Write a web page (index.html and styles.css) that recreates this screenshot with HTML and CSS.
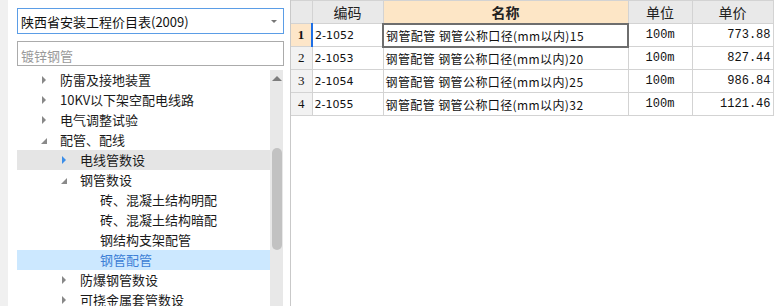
FILE: index.html
```html
<!DOCTYPE html>
<html lang="zh-CN">
<head>
    <meta charset="UTF-8">
    <title>价目表</title>
    <link rel="stylesheet" href="styles.css">
</head>
<body>
    <div class="sidebar">
        <div class="combo">
            <span>陕西省安装工程价目表(2009)</span>
            <span class="combo-arrow"></span>
        </div>
        <div class="search">
            <input type="text" placeholder="镀锌钢管">
        </div>
        <div class="tree-wrap">
            <ul class="tree">
                <li class="node lv1"><span class="tw closed"></span>防雷及接地装置</li>
                <li class="node lv1"><span class="tw closed"></span>10KV以下架空配电线路</li>
                <li class="node lv1"><span class="tw closed"></span>电气调整试验</li>
                <li class="node lv1"><span class="tw open"></span>配管、配线</li>
                <li class="node lv2 hover"><span class="tw closed"></span>电线管数设</li>
                <li class="node lv2"><span class="tw open"></span>钢管数设</li>
                <li class="node lv3"><span class="tw"></span>砖、混凝土结构明配</li>
                <li class="node lv3"><span class="tw"></span>砖、混凝土结构暗配</li>
                <li class="node lv3"><span class="tw"></span>钢结构支架配管</li>
                <li class="node lv3 selected"><span class="tw"></span>钢管配管</li>
                <li class="node lv2"><span class="tw closed"></span>防爆钢管数设</li>
                <li class="node lv2"><span class="tw closed"></span>可挠金属套管数设</li>
            </ul>
            <div class="scrollbar">
                <div class="sb-up"></div>
                <div class="sb-thumb"></div>
            </div>
        </div>
    </div>
    <div class="main">
        <table class="grid">
            <colgroup>
                <col style="width:21px">
                <col style="width:71px">
                <col style="width:245px">
                <col style="width:64px">
                <col style="width:81px">
            </colgroup>
            <thead>
                <tr>
                    <th></th>
                    <th>编码</th>
                    <th class="sorted">名称</th>
                    <th>单位</th>
                    <th>单价</th>
                </tr>
            </thead>
            <tbody>
                <tr class="current">
                    <td class="num">1</td>
                    <td class="code">2-1052</td>
                    <td class="name active">钢管配管 钢管公称口径(mm以内)15</td>
                    <td class="unit">100m</td>
                    <td class="price">773.88</td>
                </tr>
                <tr>
                    <td class="num">2</td>
                    <td class="code">2-1053</td>
                    <td class="name">钢管配管 钢管公称口径(mm以内)20</td>
                    <td class="unit">100m</td>
                    <td class="price">827.44</td>
                </tr>
                <tr>
                    <td class="num">3</td>
                    <td class="code">2-1054</td>
                    <td class="name">钢管配管 钢管公称口径(mm以内)25</td>
                    <td class="unit">100m</td>
                    <td class="price">986.84</td>
                </tr>
                <tr>
                    <td class="num">4</td>
                    <td class="code">2-1055</td>
                    <td class="name">钢管配管 钢管公称口径(mm以内)32</td>
                    <td class="unit">100m</td>
                    <td class="price">1121.46</td>
                </tr>
            </tbody>
        </table>
    </div>
</body>
</html>
```

FILE: styles.css
```css
* {
    box-sizing: border-box;
}
body {
    margin: 0;
    width: 781px;
    height: 306px;
    overflow: hidden;
    display: flex;
    background: #fff;
    font-family: "Noto Sans CJK SC", "Noto Sans", sans-serif;
    color: #1a1a1a;
}
.sidebar {
    width: 291px;
    height: 306px;
    flex-shrink: 0;
    border-left: 8px solid #f0f0f0;
    border-right: 1px solid #c9c9c9;
    padding: 8px 0 0 9px;
    display: flex;
    flex-direction: column;
}
.combo {
    width: 267px;
    height: 26px;
    border: 1px solid #5b9de6;
    display: flex;
    align-items: center;
    justify-content: space-between;
    padding: 0 6px 0 3px;
    font-size: 13px;
    color: #111;
}
.combo-arrow {
    width: 0;
    height: 0;
    border-left: 3px solid transparent;
    border-right: 3px solid transparent;
    border-top: 3px solid #777;
    margin-top: 1px;
}
.search {
    margin-top: 7px;
    width: 267px;
    height: 25px;
    border: 1px solid #ababab;
}
.search input {
    width: 100%;
    height: 100%;
    border: none;
    outline: none;
    padding: 0 3px;
    font-family: inherit;
    font-size: 13px;
    background: transparent;
}
.search input::placeholder {
    color: #9a9a9a;
}
.tree-wrap {
    margin-top: 4px;
    width: 266px;
    flex: 1;
    display: flex;
    overflow: hidden;
}
.tree {
    list-style: none;
    margin: 0;
    padding: 0;
    width: 253px;
}
.node {
    height: 20px;
    display: flex;
    align-items: center;
    font-size: 13px;
    line-height: 16px;
    white-space: nowrap;
}
.node.lv1 { padding-left: 25px; }
.node.lv2 { padding-left: 45px; }
.node.lv3 { padding-left: 65px; }
.node.hover {
    background: #e5e5e5;
}
.node.selected {
    background: #cce8ff;
    color: #3d7fd6;
}
.tw {
    width: 18px;
    height: 20px;
    position: relative;
    flex-shrink: 0;
}
.tw.closed::before {
    content: "";
    position: absolute;
    left: 0;
    top: 6px;
    border-top: 4px solid transparent;
    border-bottom: 4px solid transparent;
    border-left: 4px solid #888;
}
.node.hover .tw.closed::before {
    border-left-color: #3c8ee8;
}
.tw.open::before {
    content: "";
    position: absolute;
    left: -1px;
    top: 8px;
    border-left: 6px solid transparent;
    border-bottom: 6px solid #8a8a8a;
}
.scrollbar {
    width: 13px;
    background: #e8e8e8;
    display: flex;
    flex-direction: column;
    align-items: center;
}
.sb-up {
    margin-top: 6px;
    width: 0;
    height: 0;
    border-left: 5px solid transparent;
    border-right: 5px solid transparent;
    border-bottom: 5px solid #7d7d7d;
}
.sb-thumb {
    margin-top: 67px;
    width: 10px;
    height: 102px;
    background: #c2c2c2;
    border-radius: 5px;
}
.main {
    flex: 1;
    background: #fff;
}
.grid {
    border-collapse: collapse;
    table-layout: fixed;
    width: 482px;
}
.grid th,
.grid td {
    height: 23px;
    padding: 0;
    border: 1px solid #d3d3d3;
    white-space: nowrap;
    overflow: hidden;
}
.grid th {
    background: #e9e9e9;
    font-weight: normal;
    font-size: 14px;
    color: #222;
}
.grid th:first-child {
    border-left: none;
}
.grid th.sorted {
    background: #fde6c6;
    font-weight: bold;
}
.grid td {
    font-family: "Liberation Mono", "Noto Sans CJK SC", monospace;
    font-size: 12px;
    color: #111;
}
.grid td.num {
    background: #f2f2f2;
    border-left: none;
    text-align: center;
    font-family: "Liberation Serif", serif;
    font-size: 13px;
}
.grid tr.current td.num {
    background: #fde6c9;
    font-weight: bold;
}
.grid td.code {
    padding-left: 2px;
    font-family: "DejaVu Sans", sans-serif;
    font-size: 11px;
}
.grid tr.current td.code {
    border-left: 2px solid #1e6fe6;
}
.grid td.name {
    padding-left: 2px;
    font-family: "Noto Sans CJK SC", sans-serif;
    letter-spacing: 0.4px;
}
.grid td.name.active {
    border: 2px solid #6e6e6e;
}
.grid td.unit {
    text-align: center;
}
.grid td.price {
    text-align: right;
    padding-right: 2px;
}
```
